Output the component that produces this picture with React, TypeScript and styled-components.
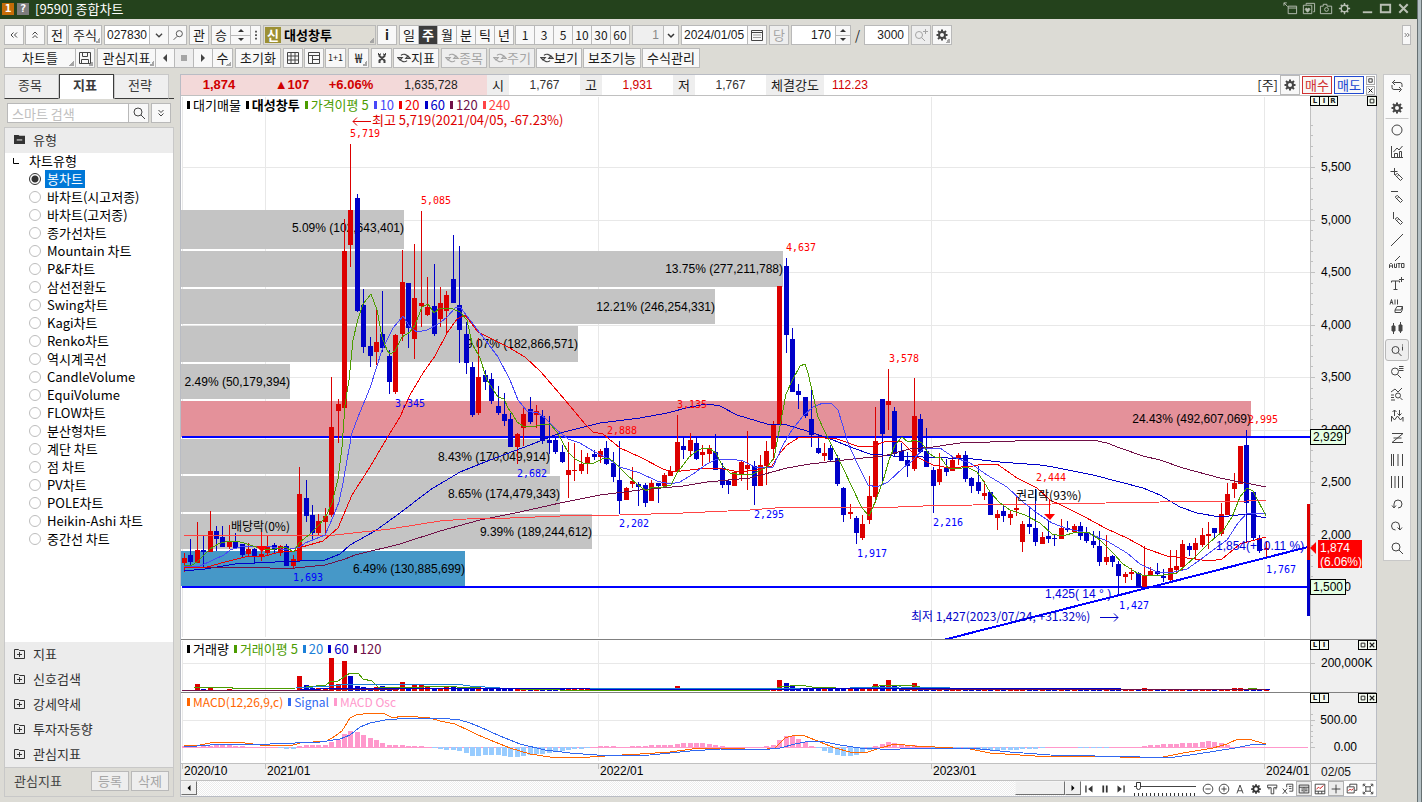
import React from 'react';
import styled, { createGlobalStyle, css } from 'styled-components';

const KR = `"Noto Sans CJK KR", sans-serif`;
const UI = KR;
const DIGITS = `"Liberation Sans", "Noto Sans CJK KR", sans-serif`;
const MONO = `"DejaVu Sans Mono", "Liberation Mono", monospace`;

const C = {
  face: '#dcdbd5',
  line: '#b9b9b9',
  btn: '#f8f8f8',
  ink: '#1a1a1a',
  icon: '#444',
  up: '#dc0000',
  down: '#0000c8',
  grid: '#e8e8e8',
  panel: '#efefef',
};

const Global = createGlobalStyle`
  * { box-sizing: border-box; }
  body { margin: 0; background: ${C.face}; font: 13px/18px ${UI}; color: ${C.ink}; }
  button, input, select { font: inherit; color: inherit; margin: 0; padding: 0; border-radius: 0; }
  button { cursor: pointer; }
`;

/* ---------- icons ---------- */

const Svg = styled.svg`
  display: block;
  flex: none;
  fill: none;
  stroke: currentColor;
  stroke-width: 1;
`;

const gear = (
  <>
    <circle cx="8" cy="8" r="3" strokeWidth="2" />
    <path d="M8 2.5v2M8 11.5v2M2.5 8h2M11.5 8h2M4 4l1.4 1.4M10.6 10.6L12 12M4 12l1.4-1.4M10.6 5.4L12 4" strokeWidth="2" />
  </>
);
const pencil = <path d="M6.5 8.5l2-1 5 5-2 2-5-5zM8 10.5l1.5-1.5" />;

const ICONS: Record<string, React.ReactNode> = {
  dblLeft: <path d="M7.5 5.5L5 8l2.5 2.5M11 5.5L8.500 8l2.5 2.5" />,
  dblRight: <path d="M5 5.5L7.5 8L5 10.5M8.5 5.5L11 8l-2.5 2.5" />,
  dblUp: <path d="M5.5 7.5L8 5l2.5 2.5M5.5 11L8 8.5l2.5 2.5" />,
  dblDown: <path d="M5.5 5L8 7.5 10.5 5M5.5 8.5L8 11l2.5-2.5" />,
  chevron: <path d="M4.5 6.5L8 10l3.5-3.5" strokeWidth="1.5" />,
  search: (<><circle cx="7" cy="7" r="4" /><path d="M10 10l4 4" /></>),
  searchLeft: (<><circle cx="9.5" cy="6.5" r="3.5" /><path d="M7 9.5L3 13.5" /></>),
  searchPlus: (<><circle cx="6" cy="8" r="3.5" /><path d="M8.5 10.5L12 14M10 4.5h5M12.5 2v5" /></>),
  dots: <path d="M7 3h2v2H7zM7 7h2v2H7zM7 11h2v2H7z" fill="currentColor" stroke="none" />,
  calendar: (<><path d="M2.5 3.5h11v10h-11zM2.5 5.5h11" /><path d="M4.5 8h7M4.5 10.5h7" strokeDasharray="1 1" /></>),
  save: <path d="M2.5 2.5h11v11h-11zM5.5 2.5v4h5v-4M4.5 13.5v-4h7v4" />,
  left: <path d="M10 4v8L6 8z" fill="currentColor" stroke="none" />,
  right: <path d="M6 4v8l4-4z" fill="currentColor" stroke="none" />,
  stop: <path d="M5 5h6v6H5z" fill="currentColor" stroke="none" />,
  grid: <path d="M2.5 2.5h11v11h-11zM2.5 6h11M2.5 10h11M6 2.5v11M10 2.5v11" />,
  layout: <path d="M2.5 2.5h11v11h-11zM2.5 5.5h11M6.5 5.5v8M6.5 9.5h7" />,
  tools: (<><path d="M5.500 4v2l5 4.500v2.500M10.500 4v2l-5 4.500v2.500" strokeWidth="2" /><path d="M4 4h1M7 4h-.5M9 4h.5M11 4h1" strokeWidth="2" /></>),
  cycle: <path d="M12.5 7A5 5 0 0 0 4.500 5M3.5 9a5 5 0 0 0 8 2M1 7.500h5L3.5 10.500zM10 8.500h5L12.500 5.500z" strokeWidth="1.3" />,
  gear,
  winOut: <path d="M5.5 5.5h9v8h-9zM5.5 7.5h9M1 2l4 4M1 2h3M1 2v3" />,
  winHeart: (<><path d="M5.5 4V2.5h9v9H13M2.5 4.5h9v9h-9z" /><path d="M7 12L4.5 9l1-1.5L7 8.5l1.5-1 1 1.5z" fill="currentColor" /></>),
  camera: (<><path d="M1.5 5.5h3v-2h4v2h5v8h-12z" /><circle cx="8" cy="9" r="2" /></>),
  gearThin: (<><circle cx="8" cy="8" r="3.5" strokeWidth="1.5" /><path d="M8 2v2.5M8 11.5V14M2 8h2.5M11.5 8H14M4 4l1.5 1.5M10.5 10.5L12 12M4 12l1.5-1.5M10.5 5.5L12 4" strokeWidth="1.5" /></>),
  min: <path d="M3 12h10" strokeWidth="2" />,
  max: <path d="M3 4h10v8H3z" strokeWidth="2" />,
  close: <path d="M3.5 3.5l9 9M12.5 3.5l-9 9" strokeWidth="2.2" />,
  refresh: <path d="M4.5 5.5L3 4M4.5 4.5h6.5q2 0 2 2v2.5M6 2L3.5 4.5 6 7M11.5 11.5H5q-2 0-2-2V7M10 9l2.5 2.5L10 14" />,
  circle: <circle cx="8" cy="8" r="5" />,
  chartHouse: <path d="M2.5 2v11.5H14M4.5 8L8 4l2 2 3.5-4M5.5 13.5v-4h3v4M10.5 13.5v-6h2v6" />,
  plusPen: (<><path d="M1.5 5.5h7M5.500 2v7" />{pencil}</>),
  minusPen: (<><path d="M2 3.5h7" />{pencil}</>),
  barPen: (<><path d="M4.5 2v7" />{pencil}</>),
  slash: <path d="M2 14L14 2" />,
  auto: (<><path d="M6 7l5-5" /><path d="M.5 14V10.500l1-1h1l1 1V14M.5 12h3M5.5 9.500v4h2v-4M8.500 9.500h3M10 9.500V14M12.500 9.500h2.500v4h-2.500z" /></>),
  textPlus: <path d="M2.5 6.5V5h8v1.5M6.5 5v8.5M4.5 13.5h4M10 3.500h5M12.500 1v5" />,
  all: (<><path d="M1 6.500l1.500-5L4 6.500M1.5 4.500h2M6 1.500v5M8.500 1.500v5" /><path d="M6 12l2-3.500h5.500L12 12zM6 12v2.500h6l1.500-3V8.500" /></>),
  candles: <path d="M3 6h3v5H3zM10 5h3v6h-3zM4.5 3v11M11.5 2v11" fill="currentColor" />,
  searchI: (<><circle cx="6.5" cy="8" r="3.5" /><path d="M9 10.5L12.5 14M13.5 4.5v4M13.5 2.5v1" /></>),
  searchList: (<><circle cx="6" cy="7.5" r="3.5" /><path d="M8.5 10.5L12 14M10 2.5h4.5M10 4.5h4.5M10 6.5h4.5" /></>),
  waveSearch: (<><path d="M2 6l4-3 3 3 4-4M2 9h3M2 11.5h3M2 14h4" /><circle cx="9" cy="9.5" r="2.5" /><path d="M11 11.5l2.5 2.5" /></>),
  waveArrows: <path d="M2.5 13.500V8l3 4 3-4 3 4 2.500-3v4.500M5.5 8V2M3.500 4L5.5 2l2 2M10.5 2v5.500M8.500 5.500l2 2 2-2" />,
  zed: <path d="M3 3.5h11L3 12.5h11M4.5 8h8" />,
  bars5: <path d="M2.5 2v12M4.5 2v12M9 2v12M13.5 2v12" />,
  bars4: <path d="M2.5 2v12M6 2v12M9.5 2v12M13.5 2v12" />,
  undo: <path d="M5 11V8a4 4 0 1 1 4 4M3 9.5L5 12l2-2.5" />,
  redo: <path d="M10.5 11V8a4 4 0 1 0-4 4M8.5 9.5l2.5 2.5 2-2.5" />,
  skipBack: (<><path d="M4.5 4v8" strokeWidth="1.5" /><path d="M12 4v8L7 8z" fill="currentColor" stroke="none" /></>),
  pause: <path d="M6 4v8M10 4v8" strokeWidth="2" />,
  skipFwd: (<><path d="M11.5 4v8" strokeWidth="1.5" /><path d="M4 4v8l5-4z" fill="currentColor" stroke="none" /></>),
  zoomOut: (<><circle cx="8" cy="8" r="5.5" /><path d="M5 8h6" /></>),
  zoomIn: (<><circle cx="8" cy="8" r="5.5" /><path d="M5 8h6M8 5v6" /></>),
  letterA: <path d="M4.5 13L8 3.5 11.5 13M5.5 10h5" />,
  hammer: <path d="M3 3.5h10.5v3H10v7H7v-7H3zM4.5 6.5v2M12.5 6.5v2" />,
  export: <path d="M6.500 6V2.500h7v8h-4M9 5h3M9 7.500h3M2 7.500l5 6M7 7.500l-5 6" />,
  tableWin: <path d="M2.5 3.5h11v9h-11zM2.5 6h11M5 8h2M5 10h2M9 8h3M9 10h3M8 6v6" />,
  chartWin: (<><path d="M2.5 2.5h11v11h-11zM2.5 10.5h11M6 10.5v3M10 10.5v3" /><path d="M4 8l2.5-2L8 7.5 12 4" stroke="#c00" /></>),
  plus: <path d="M3 8h10M8 3v10" />,
  cascade: (<><path d="M5.5 5V2.5h8v7H11M2.5 5.5h8v7h-8z" /><path d="M4 10l2-2 1.5 1.5 2-2" stroke="#c00" /></>),
  expand: <path d="M5.5 5.5h5v5h-5zM2.5 5V2.5H5M11 2.5h2.5V5M13.5 11v2.5H11M5 13.5H2.5V11M3 3l2.5 2.5M13 3l-2.5 2.5M3 13l2.5-2.5M13 13l-2.5-2.5" />,
  box: <path d="M5 5h6v6H5z" strokeWidth="1.5" />,
};

const Icon = ({ n, s = 16 }: { n: string; s?: number }) => (
  <Svg viewBox="0 0 16 16" width={s} height={s} aria-hidden="true">{ICONS[n]}</Svg>
);

/* ---------- frame ---------- */

const Window = styled.main`
  min-height: 100vh;
  display: flex;
  flex-direction: column;
  padding-right: 5px;
  background:
    linear-gradient(90deg, #667072 0 1px, #b4c0c4 1px 4px, #667072 4px) right / 5px 100% no-repeat,
    ${C.face};
`;
const TitleBar = styled.header`
  height: 19px;
  display: flex;
  align-items: center;
  gap: 3px;
  padding: 0 6px 2px 2px;
  background: #24421c;
  color: #fff;
`;
const TitleTag = styled.span<{ $bg: string }>`
  width: 12px;
  height: 12px;
  background: ${p => p.$bg};
  font: bold 11px/12px ${MONO};
  text-align: center;
`;
const Title = styled.h1`
  flex: 1;
  margin: 0 0 0 3px;
  font: 13px/16px ${UI};
`;
const TitleButton = styled.button<{ $apart?: boolean }>`
  display: flex;
  margin-left: ${p => (p.$apart ? 5 : 0)}px;
  border: 0;
  background: none;
  color: #b9c0b4;
`;
const Frame = styled.div`
  flex: 1;
  display: flex;
  flex-direction: column;
  padding: 6px 6px 6px 4px;
`;

/* ---------- toolbars ---------- */

const ToolRow = styled.div`
  display: flex;
  align-items: center;
  gap: 2px;
  height: 20px;
  margin-bottom: 3px;
`;
const Cluster = styled.div`
  display: flex;
  gap: 1px;
`;
const Joined = styled.div`
  display: flex;
  & > * + * { margin-left: -1px; }
`;
const Push = styled.div`
  margin-left: auto;
`;
const corner = css`
  background-image: linear-gradient(135deg, transparent 50%, #a5a5a5 50%);
  background-size: 5px 5px;
  background-position: right 1px bottom 1px;
  background-repeat: no-repeat;
`;
const ToolButton = styled.button<{ $w?: number; $on?: boolean; $corner?: boolean; $dim?: boolean }>`
  flex: none;
  display: flex;
  align-items: center;
  justify-content: center;
  width: ${p => p.$w ?? 20}px;
  height: 20px;
  border: 1px solid ${C.line};
  background-color: ${p => (p.$on ? '#3c3c3c' : p.$dim ? '#eeeeee' : C.btn)};
  color: ${p => (p.$on ? '#fff' : p.$dim ? '#a5a5a5' : C.ink)};
  font-weight: ${p => (p.$on ? 'bold' : 'normal')};
  line-height: 18px;
  white-space: nowrap;
  overflow: hidden;
  ${p => p.$corner && corner}
  & > svg { color: ${p => (p.$dim ? '#a5a5a5' : C.icon)}; }
`;
const NumberButton = styled(ToolButton)`
  font-size: 12px;
`;
const Field = styled.input<{ $w: number; $right?: boolean }>`
  flex: none;
  width: ${p => p.$w}px;
  height: 20px;
  border: 1px solid ${C.line};
  background: #fff;
  padding: 0 ${p => (p.$right ? 4 : 2)}px;
  font: 12px/18px ${DIGITS};
  text-align: ${p => (p.$right ? 'right' : 'left')};
`;
const Spin = styled.div<{ $w: number }>`
  display: grid;
  grid-template-rows: 9px 9px;
  width: ${p => p.$w}px;
  border: 1px solid ${C.line};
  height: 20px;
  overflow: hidden;
`;
const SpinButton = styled.button<{ $down?: boolean }>`
  display: flex;
  align-items: center;
  justify-content: center;
  height: 9px;
  border: 0;
  border-top: ${p => (p.$down ? `1px solid ${C.line}` : '0')};
  background: ${C.btn};
  &::after {
    content: '';
    border: 3px solid transparent;
    border-top-color: ${p => (p.$down ? '#333' : 'transparent')};
    border-bottom-color: ${p => (p.$down ? 'transparent' : '#333')};
    margin-top: ${p => (p.$down ? 2 : -3)}px;
  }
`;
const StockName = styled.button`
  display: flex;
  align-items: center;
  gap: 3px;
  width: 113px;
  height: 20px;
  padding: 0 1px;
  border: 1px solid ${C.line};
  background-color: #dedcd4;
  font-weight: bold;
  line-height: 18px;
  color: #000;
  ${corner}
`;
const StockTag = styled.span`
  width: 16px;
  height: 16px;
  background: #9c9034;
  color: #fff;
  line-height: 15px;
  text-align: center;
`;
const Select = styled.select`
  width: 47px;
  height: 20px;
  border: 1px solid ${C.line};
  appearance: none;
  padding: 0 19px 0 0;
  text-align: right;
  text-align-last: right;
  color: #888;
  font: 12px/18px ${DIGITS};
  background: #efefef url("data:image/svg+xml,%3Csvg xmlns='http://www.w3.org/2000/svg' width='15' height='18'%3E%3Cpath d='M0 0h15v18H0z' fill='%23f8f8f8'/%3E%3Cpath d='M.5 0v18' stroke='%23b9b9b9'/%3E%3Cpath d='M5 8l3 3 3-3' fill='none' stroke='%23333' stroke-width='1.5'/%3E%3C/svg%3E") right center no-repeat;
`;
const Slash = styled.span`
  width: 9px;
  text-align: center;
`;
const Tiny = styled.span`
  font: 9px/18px ${UI};
`;

const periods = ['일', '주', '월', '분', '틱', '년'];
const minutes = ['1', '3', '5', '10', '30', '60'];

const Toolbars = () => (
  <>
    <ToolRow>
      <Cluster>
        <ToolButton aria-label="처음"><Icon n="dblLeft" /></ToolButton>
        <ToolButton aria-label="위로"><Icon n="dblUp" /></ToolButton>
      </Cluster>
      <Cluster>
        <ToolButton>전</ToolButton>
        <ToolButton $w={34} $corner>주식</ToolButton>
      </Cluster>
      <Joined>
        <Field $w={46} aria-label="종목코드" defaultValue="027830" />
        <ToolButton aria-label="종목 목록"><Icon n="chevron" s={14} /></ToolButton>
        <ToolButton $w={19} aria-label="종목 찾기"><Icon n="searchLeft" s={14} /></ToolButton>
      </Joined>
      <ToolButton>관</ToolButton>
      <Joined>
        <ToolButton>승</ToolButton>
        <Spin $w={21}>
          <SpinButton aria-label="이전 종목" />
          <SpinButton $down aria-label="다음 종목" />
        </Spin>
        <ToolButton $w={11} aria-label="더보기"><Icon n="dots" s={14} /></ToolButton>
      </Joined>
      <Cluster>
        <StockName><StockTag>신</StockTag>대성창투</StockName>
        <ToolButton><b>i</b></ToolButton>
      </Cluster>
      <Cluster>
        <Joined>{periods.map(p => <ToolButton key={p} $on={p === '주'}>{p}</ToolButton>)}</Joined>
        <Joined>{minutes.map(m => <NumberButton key={m}>{m}</NumberButton>)}</Joined>
      </Cluster>
      <Select aria-label="분 간격" defaultValue="1"><option>1</option></Select>
      <Joined>
        <Field $w={67} aria-label="기준일" defaultValue="2024/01/05" />
        <ToolButton aria-label="달력"><Icon n="calendar" /></ToolButton>
      </Joined>
      <ToolButton $dim>당</ToolButton>
      <Joined>
        <Field $w={45} $right aria-label="표시 개수" defaultValue="170" />
        <Spin $w={16}>
          <SpinButton aria-label="늘리기" />
          <SpinButton $down aria-label="줄이기" />
        </Spin>
      </Joined>
      <Slash>/</Slash>
      <Field $w={45} $right aria-label="전체 개수" defaultValue="3000" />
      <Cluster>
        <ToolButton $dim aria-label="추가 조회"><Icon n="searchPlus" /></ToolButton>
        <ToolButton $corner aria-label="환경설정"><Icon n="gear" /></ToolButton>
      </Cluster>
      <Push><ToolButton $w={9} aria-label="펼치기"><Icon n="dblRight" s={12} /></ToolButton></Push>
    </ToolRow>
    <ToolRow>
      <Joined>
        <ToolButton $w={72} $corner>차트틀</ToolButton>
        <ToolButton $corner aria-label="저장"><Icon n="save" /></ToolButton>
      </Joined>
      <Joined>
        <ToolButton $w={59} $corner>관심지표</ToolButton>
        <ToolButton aria-label="이전"><Icon n="left" /></ToolButton>
        <ToolButton $dim aria-label="정지"><Icon n="stop" /></ToolButton>
        <ToolButton aria-label="다음"><Icon n="right" /></ToolButton>
        <ToolButton $w={21} $corner>수</ToolButton>
      </Joined>
      <ToolButton $w={46}>초기화</ToolButton>
      <Cluster>
        <ToolButton aria-label="표"><Icon n="grid" /></ToolButton>
        <ToolButton aria-label="분할"><Icon n="layout" /></ToolButton>
        <ToolButton $w={21}><Tiny>1+1</Tiny></ToolButton>
      </Cluster>
      <ToolButton $w={21} $corner>₩</ToolButton>
      <Cluster>
        <ToolButton $w={21} aria-label="도구"><Icon n="tools" /></ToolButton>
        <ToolButton $w={46}><Icon n="cycle" s={14} />지표</ToolButton>
      </Cluster>
      <ToolButton $w={46} $dim><Icon n="cycle" s={14} />종목</ToolButton>
      <Cluster>
        <ToolButton $w={46} $dim><Icon n="cycle" s={14} />주기</ToolButton>
        <ToolButton $w={46}><Icon n="cycle" s={14} />보기</ToolButton>
        <ToolButton $w={58}>보조기능</ToolButton>
        <ToolButton $w={58}>수식관리</ToolButton>
      </Cluster>
    </ToolRow>
  </>
);

/* ---------- sidebar ---------- */

const Body = styled.div`
  flex: 1;
  display: flex;
  align-items: stretch;
  gap: 6px;
  padding-top: 3px;
`;
const Sidebar = styled.aside`
  flex: none;
  width: 170px;
  display: flex;
  flex-direction: column;
`;
const Tabs = styled.div`
  display: flex;
  height: 25px;
  padding-right: 5px;
  background: linear-gradient(#3c3c3c, #3c3c3c) left bottom / 100% 1px no-repeat;
`;
const Tab = styled.button<{ $on?: boolean }>`
  flex: 1;
  padding: 0 3px 3px 0;
  border: 1px solid ${p => (p.$on ? '#3c3c3c' : '#c8c8c8')};
  border-bottom-color: ${p => (p.$on ? '#fff' : '#3c3c3c')};
  background: ${p => (p.$on ? '#fff' : C.panel)};
  font-weight: ${p => (p.$on ? 'bold' : 'normal')};
  color: #3c3c3c;
`;
const SearchRow = styled.div`
  display: flex;
  gap: 2px;
  padding: 4px 4px 4px 3px;
`;
const SearchField = styled(Field)`
  padding: 0 4px;
  font: 13px/18px ${UI};
  &::placeholder { color: #c0c0c0; opacity: 1; }
`;
const Tree = styled.section`
  flex: 1;
  display: flex;
  flex-direction: column;
  border: 1px solid #c8c8c8;
  background: #fff;
`;
const Section = styled.button`
  display: flex;
  align-items: center;
  gap: 8px;
  width: 100%;
  height: 25px;
  padding: 0 9px 2px;
  border: 0;
  background: #ececec;
  color: #333;
  text-align: left;
`;
const Options = styled.fieldset`
  flex: 1;
  border: 0;
  margin: 0;
  padding: 0;
  color: #000;
`;
const Branch = styled.legend`
  display: flex;
  align-items: center;
  gap: 10px;
  height: 17px;
  padding: 0 8px 2px;
`;
const Option = styled.label`
  display: flex;
  align-items: center;
  gap: 4px;
  height: 18px;
  padding-left: 24px;
`;
const Radio = styled.input`
  appearance: none;
  width: 12px;
  height: 12px;
  border: 1px solid #bdbdbd;
  border-radius: 50%;
  &:checked {
    border-color: #333;
    background: radial-gradient(circle, #333 0 3px, #fff 4px);
  }
`;
const OptionText = styled.span`
  padding: 0 2px;
  line-height: 18px;
  input:checked + & { background: #0078d7; color: #fff; }
`;
const SideFoot = styled.div`
  display: flex;
  align-items: center;
  gap: 2px;
  height: 29px;
  padding: 0 4px 2px 9px;
  border-top: 1px solid #c8c8c8;
  background: ${C.face};
  color: #444;
`;
const SideFootLabel = styled.span`
  flex: 1;
`;

const chartKinds = [
  '봉차트', '바차트(시고저종)', '바차트(고저종)', '종가선차트', 'Mountain 차트', 'P&F차트', '삼선전환도',
  'Swing차트', 'Kagi차트', 'Renko차트', '역시계곡선', 'CandleVolume', 'EquiVolume', 'FLOW차트', '분산형차트',
  '계단 차트', '점 차트', 'PV차트', 'POLE차트', 'Heikin-Ashi 차트', '중간선 차트',
];

const SideBar = () => (
  <Sidebar>
    <Tabs>
      <Tab>종목</Tab>
      <Tab $on>지표</Tab>
      <Tab>전략</Tab>
    </Tabs>
    <SearchRow>
      <Joined>
        <SearchField $w={122} placeholder="스마트 검색" aria-label="스마트 검색" />
        <ToolButton $w={21} aria-label="검색"><Icon n="search" /></ToolButton>
      </Joined>
      <ToolButton aria-label="모두 접기"><Icon n="dblDown" /></ToolButton>
    </SearchRow>
    <Tree>
      <Section>
        <Svg viewBox="0 0 12 12" width="11" height="11"><path d="M0 1h5l1 1h6v9H0z" fill="#333" stroke="none" /><path d="M3 6.5h6" stroke="#fff" /></Svg>
        유형
      </Section>
      <Options>
        <Branch>
          <Svg viewBox="0 0 6 6" width="6" height="6"><path d="M.5 0v5.5H6" /></Svg>
          차트유형
        </Branch>
        {chartKinds.map((k, i) => (
          <Option key={k}>
            <Radio type="radio" name="kind" defaultChecked={i === 0} />
            <OptionText>{k}</OptionText>
          </Option>
        ))}
      </Options>
      {['지표', '신호검색', '강세약세', '투자자동향', '관심지표'].map(s => (
        <Section key={s}>
          <Svg viewBox="0 0 11 11" width="11" height="11"><path d="M.5 1.5h4l1 1h5v8H.5zM3 6.5h5M5.5 4v5" /></Svg>
          {s}
        </Section>
      ))}
      <SideFoot>
        <SideFootLabel>관심지표</SideFootLabel>
        <ToolButton $w={38} $dim>등록</ToolButton>
        <ToolButton $w={38} $dim>삭제</ToolButton>
      </SideFoot>
    </Tree>
  </Sidebar>
);

/* ---------- chart data ---------- */

const STEP = 6.4;
const FIRST = 184.4;
const cx = (i: number) => Math.floor(FIRST + STEP * i);

// high, body top, body bottom, low (plot coordinates), direction
const candles = `
553 558 563 572 u|539 555 562 565 d|522 550 563 563 u|536 550 552 567 d|511 531 552 552 u|526 531 539 551 d|526 537 547 547 d|525 541 547 549 u|533 541 548 548 d|544 544 555 557 d
543 549 554 556 u|548 549 556 563 d|533 554 557 561 u|536 546 553 555 u|543 545 550 553 d|545 546 553 556 u|544 546 566 566 d|555 559 566 568 u|467 494 561 562 u|480 498 516 522 d
505 515 533 540 d|514 521 533 535 u|508 516 522 535 u|377 427 515 517 u|399 404 411 443 u|219 251 408 417 u|144 210 245 267 u|194 198 311 312 d|289 305 347 353 d|337 346 356 367 d
307 342 352 365 u|291 334 348 352 d|350 356 382 394 d|334 335 392 394 u|250 282 334 341 u|283 283 328 348 d|244 298 339 359 u|211 303 306 327 u|277 307 315 316 u|264 306 334 336 d
287 303 319 327 u|291 295 311 333 u|235 279 303 303 d|246 305 330 363 d|322 334 363 374 d|362 367 415 417 d|338 377 413 415 u|370 375 382 390 d|373 379 401 404 d|386 406 413 415 d
393 414 421 426 d|413 419 447 447 d|433 434 447 464 u|408 414 428 446 u|397 409 422 424 d|405 411 415 428 u|410 416 441 444 d|416 440 443 454 d|438 440 452 454 d|445 452 462 463 d
442 470 475 498 u|443 470 471 481 u|450 464 471 474 u|453 457 464 474 u|450 454 457 460 d|449 451 457 463 u|441 448 464 465 d|452 463 477 482 d|441 480 501 514 d|487 488 500 500 u
467 481 484 488 u|482 484 487 506 d|483 485 503 507 d|480 483 501 501 u|483 483 486 503 d|473 475 486 487 u|466 471 476 476 u|415 442 472 473 u|437 446 450 459 d|433 440 451 457 u
437 443 459 460 d|445 452 455 466 u|445 448 454 463 u|434 452 470 470 d|463 468 485 488 d|479 481 485 494 d|471 472 486 486 u|460 462 474 481 u|431 465 469 490 u|461 466 486 505 d
455 465 486 486 u|441 451 466 485 u|421 425 449 460 u|286 286 425 425 u|258 266 335 353 d|328 339 392 392 d|384 391 395 409 d|397 397 416 418 d|388 419 435 447 d|434 448 453 454 d
443 453 456 461 u|445 448 460 461 d|455 458 484 486 d|487 488 515 522 d|504 512 514 519 u|516 518 533 544 d|515 524 538 540 u|476 496 520 524 u|407 441 497 503 u|399 399 434 484 d
369 401 405 430 u|407 411 454 457 d|443 451 461 461 d|452 460 466 477 d|378 416 469 471 u|414 419 452 453 d|428 451 467 467 d|467 470 486 513 d|453 469 482 485 u|459 468 472 476 d
456 460 471 471 u|453 455 458 465 u|451 455 479 482 d|477 478 486 493 d|466 482 491 494 d|481 493 496 500 u|492 492 515 515 d|510 514 518 530 u|505 511 516 522 d|510 514 518 525 u
497 508 510 516 u|521 524 542 552 u|507 524 527 534 d|489 528 542 546 d|532 537 544 544 u|521 536 539 543 d|535 538 539 546 d|519 528 539 539 u|521 528 530 532 d|524 526 532 532 u
522 526 536 540 d|527 533 541 543 d|531 541 545 548 d|531 546 562 566 d|535 557 562 565 u|555 556 562 567 d|561 564 576 596 d|572 574 577 583 u|568 572 574 580 u|572 573 587 587 d
546 576 587 587 u|567 571 576 576 u|563 571 574 575 d|569 576 578 582 d|550 568 580 581 u|550 566 570 573 u|540 544 567 570 u|543 546 550 556 d|538 543 550 560 u|528 535 545 547 u
522 534 536 549 u|528 528 533 538 d|503 514 534 536 u|483 494 515 515 u|473 483 489 498 u|446 446 484 484 u|430 445 503 542 d|492 492 538 540 d|535 538 551 553 d|542 548 550 558 u`
  .trim()
  .split(/[|\n]/)
  .map(s => {
    const [h, a, b, l, dir] = s.split(' ');
    return { h: +h, a: +a, b: +b, l: +l, up: dir === 'u' };
  });

const averages: [string, string][] = [
  ['#0000c8', '184,571 205,569 235,564 275,562 325,560 340,554 350,545 375,531 400,513 430,490 460,472 490,460 530,445 560,433 600,423 640,418 667,413 690,407 707,404 720,406 737,415 767,424 787,425 807,431 833,440 853,448 870,454 893,456 923,457 973,459 1000,462 1040,465 1053,467 1093,475 1143,488 1160,495 1180,507 1197,513 1220,517 1247,514 1266,518'],
  ['#701048', '184,567 250,567 270,568 295,568 325,565 345,559 355,555 400,544 440,531 480,520 520,512 560,503 600,495 640,490 683,486 707,482 750,478 787,468 810,464 853,459 883,456 910,449 933,447 960,443 990,442 1040,440 1093,440 1107,443 1120,448 1143,456 1160,460 1183,468 1220,478 1266,487'],
  ['#ff4444', '184,535 335,535 390,529 440,521 480,518 510,518 560,516 620,515 683,513 750,510 787,507 840,507 873,508 923,506 973,505 1052,504 1160,502 1247,501 1266,500'],
  ['#f00000', '184,568 207,567 225,562 245,557 265,556 280,552 295,551 302,547 323,541 338,528 352,495 370,467 387,438 400,417 410,395 423,373 435,356 447,333 457,319 465,315 478,332 508,347 525,357 541,372 565,400 585,424 593,432 603,434 620,448 640,457 663,469 673,472 707,468 723,469 740,472 757,470 772,466 780,453 787,445 798,438 813,437 837,439 860,447 873,446 887,441 902,442 917,457 933,465 950,468 973,466 983,464 997,464 1017,478 1037,488 1050,500 1063,506 1083,516 1107,529 1127,538 1147,549 1167,556 1187,558 1210,561 1222,559 1240,544 1266,537'],
  ['#4848f8', '184,566 200,566 213,560 224,555 230,550 240,547 268,546 285,550 300,547 305,543 325,535 333,517 339,502 343,483 347,460 352,433 358,417 370,388 382,350 393,328 403,316 410,327 417,332 427,330 440,323 447,317 455,308 460,307 470,320 480,333 498,357 510,380 518,400 527,411 538,413 545,418 557,430 568,439 580,443 593,451 607,458 620,467 640,473 657,481 670,484 680,482 693,474 707,464 717,459 730,459 743,461 755,467 773,467 783,445 792,430 803,416 813,407 823,403 832,404 838,410 842,423 848,443 857,463 868,485 877,487 888,482 903,468 912,461 923,449 940,448 953,457 970,463 987,475 1007,487 1023,502 1037,513 1052,523 1068,529 1088,533 1107,541 1127,553 1140,564 1157,572 1170,573 1187,569 1200,560 1213,550 1227,540 1238,523 1247,513 1266,513'],
  ['#4c9c00', '184,565 192,565 197,562 203,556 210,549 218,544 228,541 236,541 244,543 250,545 262,549 275,549 285,547 294,552 299,543 310,534 320,524 327,514 332,503 338,479 342,447 345,405 349,380 353,340 358,319 363,304 371,294 377,310 382,337 387,350 390,354 395,351 402,337 410,332 415,325 422,307 428,304 434,313 440,308 453,309 460,312 467,320 472,343 480,358 487,380 498,397 504,399 508,408 513,415 517,422 523,426 533,427 543,424 550,424 557,432 568,452 575,459 583,463 592,464 602,459 608,458 613,461 627,475 637,484 646,491 652,487 663,487 671,485 677,473 690,456 697,451 703,448 710,449 716,453 722,465 730,473 743,475 753,474 767,467 774,458 778,437 783,410 786,394 792,381 800,366 805,364 808,373 812,390 818,417 825,432 830,442 843,468 852,487 862,508 869,516 873,507 877,497 883,481 889,460 895,445 902,437 908,442 915,440 922,443 928,453 935,457 941,458 948,468 957,469 967,467 977,472 984,482 990,492 1000,503 1010,510 1025,515 1040,523 1052,534 1062,536 1077,532 1088,532 1100,540 1113,553 1123,564 1137,573 1145,576 1163,575 1177,573 1185,566 1197,555 1210,542 1223,531 1232,517 1240,497 1247,488 1253,491 1266,516'],
];

const profile: [number, number, number, string, string][] = [
  [210, 39, 404, '5.09% (102,643,401)', '#c4c4c4'],
  [251, 36, 783, '13.75% (277,211,788)', '#c4c4c4'],
  [289, 35, 715, '12.21% (246,254,331)', '#c4c4c4'],
  [326, 36, 578, '9.07% (182,866,571)', '#c4c4c4'],
  [364, 35, 290, '2.49% (50,179,394)', '#c4c4c4'],
  [401, 36, 1251, '24.43% (492,607,069)', '#e4919a'],
  [439, 35, 550, '8.43% (170,049,914)', '#c4c4c4'],
  [476, 36, 560, '8.65% (174,479,343)', '#c4c4c4'],
  [514, 35, 592, '9.39% (189,244,612)', '#c4c4c4'],
  [551, 35, 465, '6.49% (130,885,699)', '#4698c8'],
];

const pivots: [number, number, string, boolean][] = [
  [350, 137, '5,719', true], [421, 204, '5,085', true], [786, 251, '4,637', true], [889, 362, '3,578', true],
  [677, 408, '3,135', true], [607, 434, '2,888', true], [1036, 481, '2,444', true], [1248, 423, '2,995', true],
  [395, 407, '3,345', false], [293, 581, '1,693', false], [517, 477, '2,682', false], [619, 527, '2,202', false],
  [754, 518, '2,295', false], [857, 557, '1,917', false], [933, 526, '2,216', false], [1119, 609, '1,427', false],
  [1266, 573, '1,767', false],
];

const months = [182, 265, 598, 931, 1264];
const prices: [number, string][] = [
  [167, '5,500'], [220, '5,000'], [272, '4,500'], [325, '4,000'], [377, '3,500'], [430, '3,000'], [482, '2,500'], [535, '2,000'], [587, '1,500'],
];

const volumeBig: Record<number, number> = {
  2: 7, 3: 2, 4: 4, 7: 2, 18: 15, 19: 6, 20: 3, 21: 3, 22: 3, 23: 33, 24: 7, 25: 30, 26: 15, 27: 5, 28: 4, 29: 3, 30: 4, 31: 5,
  32: 3, 33: 3, 34: 9, 35: 4, 36: 7, 37: 7, 38: 4, 39: 3, 40: 3, 41: 4, 42: 5, 43: 4, 44: 4, 45: 4, 46: 4, 77: 5, 93: 11, 94: 8,
  95: 5, 107: 4, 108: 7, 109: 6, 110: 11, 111: 5, 112: 3, 114: 8, 115: 4, 150: 3, 164: 3, 165: 3,
};
const volumeOf = (i: number) => volumeBig[i] ?? (i > 18 && i < 120 ? 2 : 1);

const histogram = [
  2, 2, 1, 2, 2, 3, 3, 3, 2, 2, 1, 1, 0, 0, 0, -1, -2, -2, 2, 3, 3, 3, 3, 6, 8, 14, 17, 16, 13, 10, 8, 5, 3, 3, 3, 2, 2, 2, 1,
  -1, -2, -3, -3, -4, -6, -9, -9, -8, -8, -8, -9, -10, -10, -9, -8, -7, -7, -6, -5, -4, -3, -2, -2, -1, 1, 2, 2, 2, 1, 1, 2, 2, 2, 3, 3,
  3, 3, 4, 5, 5, 5, 5, 4, 3, 2, 1, 1, 1, 1, 0, 1, 2, 3, 8, 12, 12, 9, 6, 2, -1, -4, -6, -8, -9, -9, -8, -6, -3, 2, 4, 6, 5, 3, 2,
  3, 2, 1, -1, -1, -1, -1, -1, -2, -2, -3, -3, -3, -3, -3, -3, -3, -2, -2, -2, -1, 0, 0, 1, 0, 0, -1, -1, -1, -1, -1, 0, 0, 1, 1, 1,
  2, 3, 3, 4, 4, 4, 5, 5, 5, 6, 7, 6, 5, 3, 1,
];

/* ---------- chart ---------- */

const Chart = styled.section`
  flex: 1;
  min-width: 0;
  display: flex;
  flex-direction: column;
  border: 1px solid #b9bcc4;
  background: #fff;
`;
const Quote = styled.div`
  display: flex;
  align-items: center;
  height: 21px;
  border-bottom: 1px solid #c0c0c0;
  line-height: 20px;
`;
const QuoteMain = styled.div`
  display: grid;
  grid-template-columns: 76px 70px 48px 112px;
  text-align: center;
  align-self: stretch;
  background: #f3d9d9;
`;
const Num = styled.span<{ $c?: string; $bold?: boolean; $w?: number }>`
  width: ${p => (p.$w ? `${p.$w}px` : 'auto')};
  text-align: center;
  color: ${p => p.$c ?? '#333'};
  font: ${p => (p.$bold ? 'bold 13px/20px' : '12px/20px')} ${DIGITS};
`;
const QuoteLabel = styled.span<{ $w: number }>`
  width: ${p => p.$w}px;
  align-self: stretch;
  background: #eee;
  text-align: center;
`;
const QuoteTools = styled.div`
  margin-left: auto;
  display: flex;
  align-items: center;
  gap: 2px;
  padding-right: 1px;
`;
const TradeButton = styled.button<{ $c: string }>`
  width: 30px;
  height: 18px;
  border: 1px solid ${p => p.$c};
  background: ${C.btn};
  color: ${p => p.$c};
  line-height: 16px;
`;
const Mini = styled.div`
  display: grid;
  gap: 1px;
`;
const MiniButton = styled.button`
  display: flex;
  align-items: center;
  justify-content: center;
  width: 9px;
  height: 9px;
  border: 1px solid #aaa;
  background: ${C.btn};
`;
const Pane = styled.div<{ $line: string }>`
  display: grid;
  grid-template-columns: minmax(0, 1fr) 66px;
  position: relative;
  border-bottom: 1px solid ${p => p.$line};
`;
const Plot = styled.svg`
  display: block;
  width: 100%;
  height: auto;
`;
const Axis = styled.svg`
  display: block;
  width: 66px;
  height: 100%;
  background: ${C.panel};
`;
const PaneTags = styled.div`
  position: absolute;
  top: 0;
  right: 0;
  width: 66px;
  display: flex;
`;
const PaneTag = styled.button`
  display: flex;
  align-items: center;
  justify-content: center;
  width: 10px;
  height: 10px;
  margin-right: -1px;
  border: 1px solid #000;
  background: #f4faf0;
  font: bold 7px/8px "DejaVu Sans", sans-serif;
`;
const TagGap = styled.span`
  flex: 1;
`;
const Legend = styled.div<{ $small?: boolean }>`
  position: absolute;
  top: 0;
  left: 6px;
  display: flex;
  gap: 5px;
  font-size: ${p => (p.$small ? 12 : 13)}px;
`;
const Key = styled.span<{ $c: string; $b?: boolean }>`
  display: flex;
  align-items: center;
  gap: 3px;
  color: ${p => p.$c};
  font-weight: ${p => (p.$b ? 'bold' : 'normal')};
  line-height: 18px;
  white-space: nowrap;
  &::before { content: ''; width: 3px; height: 8px; background: ${p => p.$c}; }
`;
const Figure = styled.text`
  font: 12px ${DIGITS};
`;
const Note = styled.text<{ $small?: boolean }>`
  font: ${p => (p.$small ? 12 : 13)}px ${UI};
`;
const Pivot = styled.text`
  font: 10px ${MONO};
`;
const DateRow = styled.div`
  display: grid;
  grid-template-columns: minmax(0, 1fr) 66px;
  background: ${C.panel};
  border-bottom: 1px solid #c0c0c0;
`;
const DateNow = styled.div`
  border-left: 1px solid #c0c0c0;
  padding-left: 10px;
  font: 12px/16px ${DIGITS};
`;
const Crisp = styled.g`
  shape-rendering: crispEdges;
`;

const Tags = ({ names, closable }: { names: string[]; closable?: boolean }) => (
  <PaneTags>
    {names.map(n => <PaneTag key={n}>{n}</PaneTag>)}
    <TagGap />
    <PaneTag aria-label="확대"><Icon n="box" s={10} /></PaneTag>
    {closable && <PaneTag aria-label="닫기"><Icon n="close" s={8} /></PaneTag>}
  </PaneTags>
);

const Keys = ({ items, small }: { items: [string, string, boolean?][]; small?: boolean }) => (
  <Legend $small={small}>{items.map(([t, c, b]) => <Key key={t} $c={c} $b={b}>{t}</Key>)}</Legend>
);

const PricePane = () => (
  <Pane $line="#808080">
    <Plot viewBox="181 96 1129 543">
      <Crisp>
        {prices.map(([y]) => <rect key={y} x="182" y={y} width="1128" height="1" fill={C.grid} />)}
        {months.map(x => <rect key={x} x={x} y="97" width="1" height="540" fill={C.grid} />)}
        {profile.map(([y, h, x, t, c]) => <rect key={t} x="181" y={y} width={x - 181} height={h} fill={c} />)}
        <path d="M182 437h1128M182 587h1126" stroke="#0000ff" strokeWidth="2" />
      </Crisp>
      {profile.map(([y, , x, t]) => <Figure key={t} x={x} y={y + 22} textAnchor="end">{t}</Figure>)}
      <Crisp>
        {candles.map((k, i) => (
          <g key={i} fill={k.up ? C.up : C.down}>
            <rect x={cx(i)} y={k.h} width="1" height={Math.max(1, k.l - k.h)} />
            <rect x={cx(i) - 2} y={k.a} width="5" height={Math.max(1, k.b - k.a)} />
          </g>
        ))}
      </Crisp>
      <Crisp fill="none">
        {averages.map(([c, pts]) => <polyline key={c} points={pts} stroke={c} />)}
        <path d="M943 640L1308 547" stroke="#0000ff" strokeWidth="2" />
      </Crisp>
      <g fill="none" stroke="#d00"><path d="M353 121.5h18M357 117.5l-4 4 4 4" /></g>
      <g fill="none" stroke="#0000c8"><path d="M1100 617.5h18M1114 613.5l4 4-4 4" /></g>
      <g fill="#f00">
        <path d="M261 532h1v14h5l-5 6-6-6h5zM1049 499h1v15h5l-5 6-6-6h5z" />
      </g>
      <Crisp>
        <rect x="1307" y="504" width="3" height="56" fill={C.up} />
        <rect x="1307" y="560" width="3" height="56" fill={C.down} />
      </Crisp>
      {pivots.map(([x, y, t, up]) => <Pivot key={t} x={x} y={y} fill={up ? '#f00' : '#00f'}>{t}</Pivot>)}
      <Note x="372" y="125" fill="#d00">최고 5,719(2021/04/05, -67.23%)</Note>
      <Note x="911" y="621" fill="#0000c8" $small>최저 1,427(2023/07/24, +31.32%)</Note>
      <Note x="231" y="531" $small>배당락(0%)</Note>
      <Note x="1016" y="500" $small>권리락(93%)</Note>
      <Figure x="1216" y="550" fill="#00d">1,854(+10.11 %)</Figure>
      <Figure x="1045" y="598" fill="#00d">1,425(  14 ° )</Figure>
    </Plot>
    <Axis viewBox="1310 96 66 543">
      <Crisp fill="#c0c0c0">
        <rect x="1310" y="96" width="1" height="543" />
        {prices.map(([y]) => (
          <g key={y}>
            <rect x="1311" y={y} width="4" height="1" />
            {[11, 21, 32, 42].map(d => <rect key={d} x="1311" y={y - d} width="2" height="1" />)}
          </g>
        ))}
      </Crisp>
      {prices.map(([y, t]) => <Figure key={y} x="1321" y={y + 4}>{t}</Figure>)}
      <Crisp fill="#e4ffe4" stroke="#000">
        <rect x="1310.5" y="429.5" width="35" height="15" />
        <rect x="1310.5" y="579.5" width="35" height="15" />
      </Crisp>
      <Figure x="1313" y="441">2,929</Figure>
      <Figure x="1313" y="591">1,500</Figure>
      <path d="M1310 548l6-6v12z" fill="#f00" />
      <rect x="1318" y="540" width="44" height="28" fill="#f00" />
      <Figure x="1320" y="552" fill="#fff">1,874</Figure>
      <Figure x="1320" y="566" fill="#fff">(6.06%)</Figure>
    </Axis>
    <Keys items={[['대기매물', '#000'], ['대성창투', '#000', true], ['가격이평 5', '#4c9c00'], ['10', '#4848f8'], ['20', '#f00000'], ['60', '#0000c8'], ['120', '#701048'], ['240', '#ff4444']]} />
    <Tags names={['L', 'I', 'R']} />
  </Pane>
);

const VolumePane = () => (
  <Pane $line="#808080">
    <Plot viewBox="181 640 1129 52">
      <Crisp>
        <rect x="182" y="663" width="1128" height="1" fill={C.grid} />
        {months.map(x => <rect key={x} x={x} y="641" width="1" height="50" fill={C.grid} />)}
        {candles.map((k, i) => (
          <rect key={i} x={cx(i) - 2} y={691 - volumeOf(i)} width="5" height={volumeOf(i)} fill={k.up && i !== 26 ? C.up : C.down} />
        ))}
      </Crisp>
      <Crisp fill="none">
        <polyline stroke="#4c9c00" points="194,688 225,687 240,689 296,688 326,685 330,682 338,681 350,673 358,673 363,679 372,681 378,687 413,688 433,686 480,688 560,690 770,690 780,687 800,685 812,687 860,689 885,685 915,686 930,689 1240,690 1257,688" />
        <polyline stroke="#1c80d8" points="296,688 330,686 350,684 380,684 455,684 470,686 500,688 780,689 850,688 900,687 1000,689 1266,690" />
        <polyline stroke="#0000c8" points="182,690 300,690 340,688 480,688 700,690 900,688 970,688 1270,690" />
        <polyline stroke="#701048" points="182,690 330,690 400,689 900,689 970,689 1266,690" />
      </Crisp>
    </Plot>
    <Axis viewBox="1310 640 66 52">
      <Crisp fill="#c0c0c0"><rect x="1310" y="640" width="1" height="52" /><rect x="1311" y="663" width="4" height="1" /></Crisp>
      <Figure x="1321" y="667">200,000K</Figure>
    </Axis>
    <Keys items={[['거래량', '#000'], ['거래이평 5', '#4c9c00'], ['20', '#1c80d8'], ['60', '#0000c8'], ['120', '#701048']]} />
    <Tags names={['L', 'I']} closable />
  </Pane>
);

const MacdPane = () => (
  <Pane $line="#c0c0c0">
    <Plot viewBox="181 693 1129 70">
      <Crisp>
        <rect x="182" y="720" width="1128" height="1" fill={C.grid} />
        {months.map(x => <rect key={x} x={x} y="694" width="1" height="67" fill={C.grid} />)}
        <rect x="182" y="747" width="1126" height="1" fill="#ff98cc" />
        {histogram.map((v, i) => (
          <rect key={i} x={cx(i) - 2} y={v > 0 ? 748 - v : 747} width="5" height={Math.abs(v)} fill={v > 0 ? '#ff98cc' : '#98ccff'} />
        ))}
      </Crisp>
      <Crisp fill="none">
        <polyline stroke="#ff6600" points="184,745 200,745 210,743 238,742 260,745 290,746 300,743 327,741 335,736 342,731 350,718 356,715 370,713 385,714 393,718 402,716 418,717 430,718 440,721 455,724 470,731 478,735 490,740 510,748 530,754 550,757 575,758 605,756 640,754 670,752 700,748 730,748 760,750 775,748 785,738 795,735 805,736 820,742 835,748 850,752 865,753 880,748 895,744 905,745 915,746 935,747 970,749 990,753 1020,755 1050,757 1070,756 1100,756 1140,758 1163,757 1173,755 1183,753 1213,748 1227,744 1238,739 1248,739 1266,744" />
        <polyline stroke="#3068f0" points="184,747 210,745 230,744 270,744 320,742 340,739 350,735 360,727 370,723 385,720 410,718 440,718 460,720 470,723 480,727 500,736 520,744 545,750 570,753 610,756 650,755 690,751 720,749 760,750 780,748 795,744 810,741 825,742 840,745 860,748 880,749 900,749 925,748 970,748 1010,752 1050,755 1140,757 1175,757 1190,755 1210,752 1235,748 1250,745 1266,744" />
      </Crisp>
    </Plot>
    <Axis viewBox="1310 693 66 70">
      <Crisp fill="#c0c0c0">
        <rect x="1310" y="693" width="1" height="70" />
        <rect x="1311" y="720" width="4" height="1" /><rect x="1311" y="747" width="4" height="1" />
        {[714, 725, 731, 736, 742].map(y => <rect key={y} x="1311" y={y} width="2" height="1" />)}
      </Crisp>
      <Figure x="1357" y="724" textAnchor="end">500.00</Figure>
      <Figure x="1357" y="751" textAnchor="end">0.00</Figure>
    </Axis>
    <Keys small items={[['MACD(12,26,9,c)', '#ff6600'], ['Signal', '#3068f0'], ['MACD Osc', '#ff98cc']]} />
    <Tags names={['L', 'I']} closable />
  </Pane>
);

/* ---------- bottom bar ---------- */

const Bottom = styled.div`
  display: flex;
  height: 15px;
  background: ${C.panel};
`;
const ScrollTrack = styled.div`
  flex: 1;
  display: flex;
  justify-content: flex-end;
  background: repeating-conic-gradient(#fff 0 25%, #ececec 0 50%) 0 0 / 2px 2px;
`;
const ScrollButton = styled.button<{ $w?: number }>`
  flex: none;
  display: flex;
  align-items: center;
  justify-content: center;
  width: ${p => p.$w ?? 16}px;
  height: 14px;
  border: 1px solid;
  border-color: #f4f4f4 #707070 #707070 #f4f4f4;
  background: ${C.panel};
  color: #000;
`;
const BottomTools = styled.div`
  display: flex;
  align-items: center;
  background: #fff;
`;
const BottomButton = styled.button<{ $on?: boolean }>`
  display: flex;
  align-items: center;
  justify-content: center;
  width: 16px;
  height: 15px;
  border: 1px solid ${p => (p.$on ? '#b0b0b0' : 'transparent')};
  background: ${p => (p.$on ? '#ececec' : 'none')};
  color: #333;
`;
const Zoom = styled.input`
  appearance: none;
  width: 62px;
  height: 14px;
  margin: 0 4px 0 5px;
  background:
    linear-gradient(#444, #444) 0 4px / 100% 1px no-repeat,
    repeating-linear-gradient(90deg, #333 0 1px, transparent 1px 4px) 0 100% / 100% 3px no-repeat;
  &::-webkit-slider-thumb {
    appearance: none;
    width: 5px;
    height: 8px;
    margin-top: -5px;
    border: 1px solid #333;
    border-radius: 0 0 3px 3px;
    background: #fff;
  }
`;

/* ---------- right strip ---------- */

const Strip = styled.nav`
  flex: none;
  align-self: flex-start;
  width: 28px;
  padding: 0 1px 1px;
  border: 1px solid #c8c8c8;
  background: #fafafa;
  display: flex;
  flex-direction: column;
`;
const StripButton = styled.button<{ $on?: boolean; $rule?: boolean }>`
  display: flex;
  align-items: center;
  justify-content: center;
  height: 22px;
  border: 1px solid ${p => (p.$on ? '#b8b8b8' : 'transparent')};
  border-bottom-color: ${p => (p.$on ? '#b8b8b8' : p.$rule ? '#c8c8c8' : 'transparent')};
  border-radius: ${p => (p.$on ? 3 : 0)}px;
  background: ${p => (p.$on ? '#eee' : 'none')};
  color: ${C.icon};
`;

const strip = [
  'refresh', 'gear', 'circle', 'chartHouse', 'plusPen', 'minusPen', 'barPen', 'slash', 'auto', 'textPlus', 'all', 'candles',
  'searchI', 'searchList', 'waveSearch', 'waveArrows', 'zed', 'bars5', 'bars4', 'undo', 'redo', 'search',
];

export default function App() {
  return (
    <Window>
      <Global />
      <TitleBar>
        <TitleTag $bg="#c46c08">1</TitleTag>
        <TitleTag $bg="#7c7c7c">?</TitleTag>
        <Title>[9590] 종합차트</Title>
        {['winOut', 'winHeart', 'camera', 'gearThin', 'min', 'max', 'close'].map(n => (
          <TitleButton key={n} $apart={n === 'min'} aria-label={n}><Icon n={n} s={15} /></TitleButton>
        ))}
      </TitleBar>
      <Frame>
        <Toolbars />
        <Body>
          <SideBar />
          <Chart>
            <Quote>
              <QuoteMain>
                <Num $bold $c="#d00000">1,874</Num>
                <Num $bold $c="#d00000">▲107</Num>
                <Num $bold $c="#d00000">+6.06%</Num>
                <Num $c="#222">1,635,728</Num>
              </QuoteMain>
              <QuoteLabel $w={22}>시</QuoteLabel><Num $w={71}>1,767</Num>
              <QuoteLabel $w={22}>고</QuoteLabel><Num $w={71} $c="#d00000">1,931</Num>
              <QuoteLabel $w={22}>저</QuoteLabel><Num $w={71}>1,767</Num>
              <QuoteLabel $w={58}>체결강도</QuoteLabel><Num $w={52} $c="#d00000">112.23</Num>
              <QuoteTools>
                <span>[주]</span>
                <ToolButton aria-label="차트 설정"><Icon n="gear" /></ToolButton>
                <TradeButton $c="#d03030">매수</TradeButton>
                <TradeButton $c="#2048d0">매도</TradeButton>
                <Mini>
                  <MiniButton aria-label="최대화"><Icon n="box" s={9} /></MiniButton>
                  <MiniButton aria-label="닫기"><Icon n="close" s={7} /></MiniButton>
                </Mini>
              </QuoteTools>
            </Quote>
            <PricePane />
            <VolumePane />
            <MacdPane />
            <DateRow>
              <Plot viewBox="181 764 1129 16">
                <Crisp fill="#c0c0c0">{months.map(x => <rect key={x} x={x} y="764" width="1" height="5" />)}</Crisp>
                {['2020/10', '2021/01', '2022/01', '2023/01', '2024/01'].map((t, i) => (
                  <Figure key={t} x={months[i] + 2} y="775">{t}</Figure>
                ))}
              </Plot>
              <DateNow>02/05</DateNow>
            </DateRow>
            <Bottom>
              <ScrollButton aria-label="왼쪽"><Icon n="left" s={12} /></ScrollButton>
              <ScrollTrack><ScrollButton $w={50} aria-label="스크롤" /></ScrollTrack>
              <ScrollButton aria-label="오른쪽"><Icon n="right" s={12} /></ScrollButton>
              <BottomTools>
                {['skipBack', 'pause', 'skipFwd'].map(n => <BottomButton key={n} aria-label={n}><Icon n={n} s={14} /></BottomButton>)}
                <Zoom type="range" aria-label="확대 비율" min="0" max="100" defaultValue="4" />
                {['zoomOut', 'zoomIn', 'letterA', 'gear', 'hammer', 'export', 'tableWin', 'chartWin', 'plus', 'cascade', 'expand'].map(n => (
                  <BottomButton key={n} $on={n === 'tableWin' || n === 'plus'} aria-label={n}><Icon n={n} s={14} /></BottomButton>
                ))}
              </BottomTools>
            </Bottom>
          </Chart>
          <Strip>
            {strip.map(n => (
              <StripButton key={n} $on={n === 'searchI'} $rule={n === 'gear'} aria-label={n}><Icon n={n} /></StripButton>
            ))}
          </Strip>
        </Body>
      </Frame>
    </Window>
  );
}
